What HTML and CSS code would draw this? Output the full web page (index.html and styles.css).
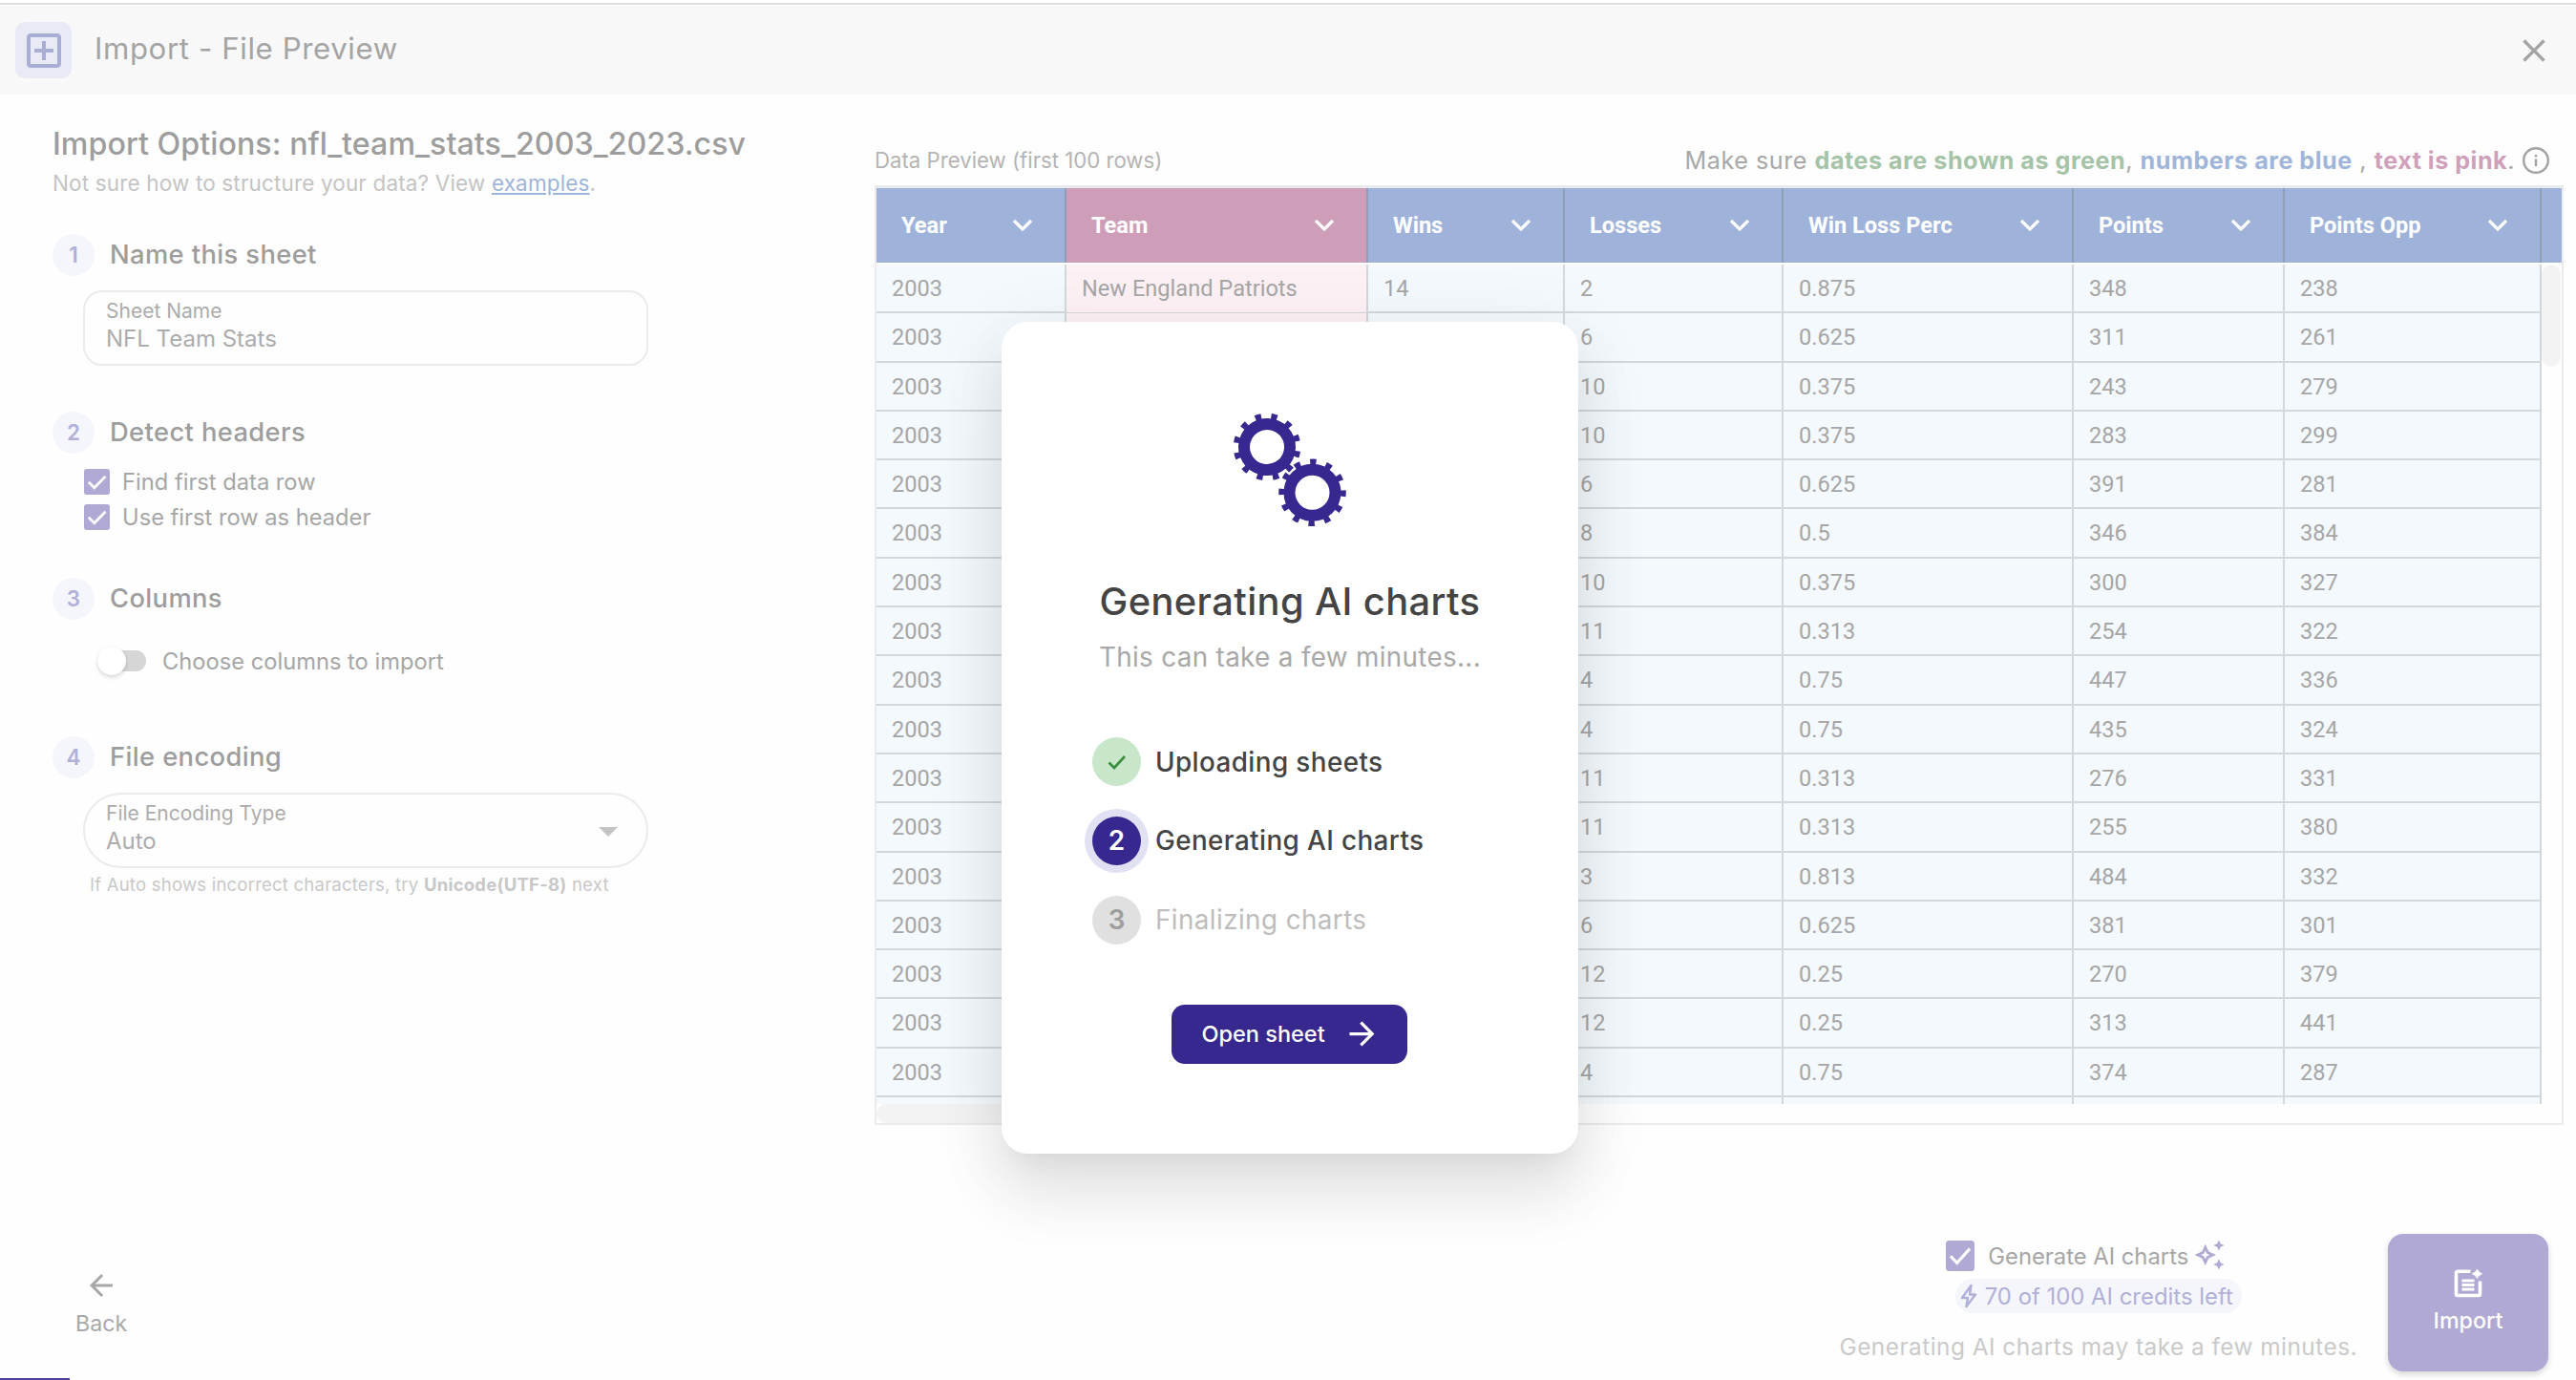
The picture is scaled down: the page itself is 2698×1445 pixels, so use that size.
FILE: index.html
```html
<!DOCTYPE html>
<html lang="en">
<head>
    <meta charset="UTF-8">
    <title>Import - File Preview</title>
    <link rel="stylesheet" href="styles.css">
</head>
<body>
    <header class="top-bar">
        <div class="top-icon">
            <svg width="48" height="48" viewBox="0 0 24 24"><path d="M19 3H5c-1.11 0-2 .9-2 2v14c0 1.1.89 2 2 2h14c1.1 0 2-.9 2-2V5c0-1.1-.9-2-2-2zm0 16H5V5h14v14zm-8-2h2v-4h4v-2h-4V7h-2v4H7v2h4z"/></svg>
        </div>
        <h1 class="top-title">Import - File Preview</h1>
        <svg class="close-icon" width="40" height="40" viewBox="0 0 24 24"><path d="M19 6.41L17.59 5 12 10.59 6.41 5 5 6.41 10.59 12 5 17.59 6.41 19 12 13.41 17.59 19 19 17.59 13.41 12z"/></svg>
    </header>

    <main class="content">
        <section class="options">
            <h2 class="options-title">Import Options: nfl_team_stats_2003_2023.csv</h2>
            <p class="options-hint">Not sure how to structure your data? View <a href="#" class="link">examples</a>.</p>

            <div class="step step-name">
                <div class="step-head"><span class="step-number">1</span><h3 class="step-title">Name this sheet</h3></div>
                <div class="field">
                    <span class="field-label">Sheet Name</span>
                    <span class="field-value">NFL Team Stats</span>
                </div>
            </div>

            <div class="step step-headers">
                <div class="step-head"><span class="step-number">2</span><h3 class="step-title">Detect headers</h3></div>
                <div class="check-row check-first">
                    <svg class="checkbox" width="27" height="27" viewBox="0 0 18 18"><rect width="18" height="18" rx="2"/><path d="M3.2 9.2l4 4 7.8-8"/></svg>
                    <span>Find first data row</span>
                </div>
                <div class="check-row">
                    <svg class="checkbox" width="27" height="27" viewBox="0 0 18 18"><rect width="18" height="18" rx="2"/><path d="M3.2 9.2l4 4 7.8-8"/></svg>
                    <span>Use first row as header</span>
                </div>
            </div>

            <div class="step step-columns">
                <div class="step-head"><span class="step-number">3</span><h3 class="step-title">Columns</h3></div>
                <div class="toggle-row">
                    <span class="toggle"><span class="knob"></span></span>
                    <span>Choose columns to import</span>
                </div>
            </div>

            <div class="step">
                <div class="step-head"><span class="step-number">4</span><h3 class="step-title">File encoding</h3></div>
                <div class="field field-select">
                    <div class="field-text">
                        <span class="field-label">File Encoding Type</span>
                        <span class="field-value">Auto</span>
                    </div>
                    <span class="arrow-down"></span>
                </div>
                <p class="helper">If Auto shows incorrect characters, try <b>Unicode(UTF-8)</b> next</p>
            </div>
        </section>

        <section class="preview">
            <div class="preview-head">
                <span class="preview-title">Data Preview (first 100 rows)</span>
                <span class="legend">Make sure <b class="green">dates are shown as green</b>, <b class="blue">numbers are blue</b> , <b class="pink">text is pink</b>.</span>
                <svg class="info-icon" width="30" height="30" viewBox="0 0 30 30"><circle cx="15" cy="15" r="12.8"/><path d="M15 13.5v7.5M15 9v2.6"/></svg>
            </div>

            <div class="table">
                <div class="table-header">
                    <div class="th">Year<svg class="chevron" width="22" height="14" viewBox="0 0 22 14"><path d="M2 2l9 9 9-9"/></svg></div>
                    <div class="th th-text">Team<svg class="chevron" width="22" height="14" viewBox="0 0 22 14"><path d="M2 2l9 9 9-9"/></svg></div>
                    <div class="th">Wins<svg class="chevron" width="22" height="14" viewBox="0 0 22 14"><path d="M2 2l9 9 9-9"/></svg></div>
                    <div class="th">Losses<svg class="chevron" width="22" height="14" viewBox="0 0 22 14"><path d="M2 2l9 9 9-9"/></svg></div>
                    <div class="th">Win Loss Perc<svg class="chevron" width="22" height="14" viewBox="0 0 22 14"><path d="M2 2l9 9 9-9"/></svg></div>
                    <div class="th">Points<svg class="chevron" width="22" height="14" viewBox="0 0 22 14"><path d="M2 2l9 9 9-9"/></svg></div>
                    <div class="th">Points Opp<svg class="chevron" width="22" height="14" viewBox="0 0 22 14"><path d="M2 2l9 9 9-9"/></svg></div>
                </div>
                <div class="table-scroll">
                    <div class="table-body">
                        <div class="tr"><span>2003</span><span>New England Patriots</span><span>14</span><span>2</span><span>0.875</span><span>348</span><span>238</span></div>
                        <div class="tr"><span>2003</span><span></span><span></span><span>6</span><span>0.625</span><span>311</span><span>261</span></div>
                        <div class="tr"><span>2003</span><span></span><span></span><span>10</span><span>0.375</span><span>243</span><span>279</span></div>
                        <div class="tr"><span>2003</span><span></span><span></span><span>10</span><span>0.375</span><span>283</span><span>299</span></div>
                        <div class="tr"><span>2003</span><span></span><span></span><span>6</span><span>0.625</span><span>391</span><span>281</span></div>
                        <div class="tr"><span>2003</span><span></span><span></span><span>8</span><span>0.5</span><span>346</span><span>384</span></div>
                        <div class="tr"><span>2003</span><span></span><span></span><span>10</span><span>0.375</span><span>300</span><span>327</span></div>
                        <div class="tr"><span>2003</span><span></span><span></span><span>11</span><span>0.313</span><span>254</span><span>322</span></div>
                        <div class="tr"><span>2003</span><span></span><span></span><span>4</span><span>0.75</span><span>447</span><span>336</span></div>
                        <div class="tr"><span>2003</span><span></span><span></span><span>4</span><span>0.75</span><span>435</span><span>324</span></div>
                        <div class="tr"><span>2003</span><span></span><span></span><span>11</span><span>0.313</span><span>276</span><span>331</span></div>
                        <div class="tr"><span>2003</span><span></span><span></span><span>11</span><span>0.313</span><span>255</span><span>380</span></div>
                        <div class="tr"><span>2003</span><span></span><span></span><span>3</span><span>0.813</span><span>484</span><span>332</span></div>
                        <div class="tr"><span>2003</span><span></span><span></span><span>6</span><span>0.625</span><span>381</span><span>301</span></div>
                        <div class="tr"><span>2003</span><span></span><span></span><span>12</span><span>0.25</span><span>270</span><span>379</span></div>
                        <div class="tr"><span>2003</span><span></span><span></span><span>12</span><span>0.25</span><span>313</span><span>441</span></div>
                        <div class="tr"><span>2003</span><span></span><span></span><span>4</span><span>0.75</span><span>374</span><span>287</span></div>
                        <div class="tr"><span></span><span></span><span></span><span></span><span></span><span></span><span></span></div>
                    </div>
                    <div class="scroll-y"></div>
                </div>
                <div class="scroll-x"></div>
            </div>
        </section>
    </main>

    <footer class="footer">
        <a href="#" class="back">
            <svg width="36" height="36" viewBox="0 0 24 24"><path d="M20 11H7.83l5.59-5.59L12 4l-8 8 8 8 1.41-1.41L7.83 13H20v-2z"/></svg>
            Back
        </a>
        <div class="ai-options">
            <div class="ai-check">
                <svg class="checkbox" width="30" height="32" viewBox="0 0 18 18" preserveAspectRatio="none"><rect width="18" height="18" rx="2"/><path d="M3 9.2l4 4 8-8.4"/></svg>
                <span class="ai-label">Generate AI charts</span>
                <svg class="sparkle" width="34" height="34" viewBox="0 0 24 24"><path d="M19 9l1.25-2.75L23 5l-2.75-1.25L19 1l-1.25 2.75L15 5l2.75 1.25L19 9zm0 6l-1.25 2.75L15 19l2.75 1.25L19 23l1.25-2.75L23 19l-2.75-1.25L19 15zm-7.5-5.5L9 4 6.5 9.5 1 12l5.5 2.5L9 20l2.5-5.5L17 12l-5.5-2.5zm-1.51 3.49L9 15.17l-.99-2.18L5.83 12l2.18-.99L9 8.83l.99 2.18 2.18.99-2.18.99z"/></svg>
            </div>
            <div class="credits">
                <svg class="bolt" width="18" height="26" viewBox="0 0 18 26"><path d="M11.5 2L2 15h6l-1.5 9L16 11.5h-6z"/></svg>
                70 of 100 AI credits left
            </div>
            <p class="ai-note">Generating AI charts may take a few minutes.</p>
        </div>
        <button class="import-button">
            <svg width="30" height="30" viewBox="0 0 30 30">
                <path class="doc" d="M17.5 2.2H4a1.5 1.5 0 0 0-1.5 1.5V26A1.5 1.5 0 0 0 4 27.5h22a1.5 1.5 0 0 0 1.5-1.5V12.5"/>
                <path class="doc-lines" d="M8.5 12h13M8.5 16.5h13M8.5 21h13"/>
                <path class="doc-plus" d="M24.5 0l1.8 3 3.2 1.8-3.2 1.8-1.8 3-1.8-3-3.2-1.8 3.2-1.8z"/>
            </svg>
            Import
        </button>
    </footer>
    <div class="progress"></div>

    <div class="modal">
        <svg class="gears" width="120" height="120" viewBox="0 0 120 120">
            <g transform="rotate(13.5 36 36)">
                <circle class="gear-ring" cx="36" cy="36" r="24"/>
                <circle class="gear-teeth" cx="36" cy="36" r="31.5" pathLength="120"/>
            </g>
            <g transform="rotate(1.5 83.5 83.8)">
                <circle class="gear-ring" cx="83.5" cy="83.8" r="24"/>
                <circle class="gear-teeth" cx="83.5" cy="83.8" r="31.5" pathLength="120"/>
            </g>
        </svg>
        <h2 class="modal-title">Generating AI charts</h2>
        <p class="modal-text">This can take a few minutes...</p>
        <div class="stages">
            <div class="stage">
                <span class="stage-dot dot-done"><svg width="26" height="26" viewBox="0 0 26 26"><path d="M4.5 13.5l5.5 5.5 11-12"/></svg></span>
                <span>Uploading sheets</span>
            </div>
            <div class="stage">
                <span class="stage-dot dot-active">2</span>
                <span>Generating AI charts</span>
            </div>
            <div class="stage stage-waiting">
                <span class="stage-dot dot-waiting">3</span>
                <span>Finalizing charts</span>
            </div>
        </div>
        <button class="open-button">
            Open sheet
            <svg width="39" height="39" viewBox="0 0 24 24"><path d="M12 4l-1.41 1.41L16.17 11H4v2h12.17l-5.58 5.59L12 20l8-8z"/></svg>
        </button>
    </div>
</body>
</html>
```
FILE: styles.css
```css
* {
    box-sizing: border-box;
}

body {
    font-family: Inter, "Liberation Sans", sans-serif;
    margin: 0;
    display: flex;
    flex-direction: column;
    height: 1445px;
    overflow: hidden;
    position: relative;
    background-color: #fefefe;
    color: #a3a3a3;
}

h1, h2, h3, p {
    margin: 0;
    font-weight: 400;
}

svg {
    flex: none;
    fill: currentColor;
}

button {
    border: none;
    font-family: inherit;
    cursor: pointer;
}

/* Top bar */
.top-bar {
    height: 99px;
    flex: none;
    display: flex;
    align-items: center;
    padding: 6px 24px 0 16px;
    background: linear-gradient(#fff 3px, #ddd 3px, #ddd 5px, #fff 5px, #fff 6px, #f8f8f8 6px);
}

.top-icon {
    width: 59px;
    height: 59px;
    border-radius: 10px;
    background-color: #e8eaf6;
    color: #aaaed5;
    display: flex;
    align-items: center;
    justify-content: center;
}

.top-title {
    flex: 1;
    margin: 0 0 3px 24px;
    font-size: 31.2px;
    letter-spacing: 0.6px;
    line-height: 40px;
    color: #a4a4a4;
}

.close-icon {
    color: #a3a3a3;
}

.content {
    display: flex;
    height: 1181px;
    flex: none;
}

/* Left column */
.options {
    width: 916px;
    flex: none;
    padding: 32px 0 0 55px;
}

.options-title {
    font-size: 32.2px;
    font-weight: 500;
    letter-spacing: 0.05px;
    line-height: 40px;
    color: #9d9d9d;
}

.options-hint {
    margin-top: 6px;
    font-size: 22.5px;
    letter-spacing: 0.15px;
    line-height: 30px;
    color: #c4c4c4;
}

.link {
    color: #9fb5da;
}

.step-name {
    height: 186px;
    margin-top: 38px;
}

.step-headers {
    height: 174px;
}

.step-columns {
    height: 166px;
}

.step-head {
    display: flex;
    align-items: center;
    height: 43px;
    margin-bottom: 1px;
}

.step-number {
    width: 44px;
    height: 44px;
    border-radius: 50%;
    background-color: #f5f6fb;
    color: #b0b0d8;
    font-size: 22.5px;
    font-weight: 600;
    line-height: 43px;
    text-align: center;
}

.step-title {
    margin-left: 16px;
    font-size: 27.3px;
    font-weight: 500;
    letter-spacing: 0.4px;
    color: #9d9d9d;
}

.field {
    width: 592px;
    height: 79px;
    margin: 16px 0 0 32px;
    padding: 7px 22px 0;
    border: 2px solid #ebebeb;
    border-radius: 20px;
}

.field-label {
    display: block;
    font-size: 21px;
    line-height: 26px;
    color: #acacac;
}

.field-value {
    display: block;
    font-size: 24px;
    line-height: 32px;
    color: #acacac;
}

.field-select {
    display: flex;
    justify-content: space-between;
    border-radius: 40px;
    padding-right: 30px;
}

.arrow-down {
    margin-top: 27px;
    width: 0;
    height: 0;
    border: 10px solid transparent;
    border-top-color: #c4c4c4;
    border-bottom: none;
}

.helper {
    margin: 5px 0 0 39px;
    font-size: 18.5px;
    letter-spacing: 0.23px;
    line-height: 24px;
    color: #c8c8c8;
}

.check-row {
    display: flex;
    align-items: center;
    height: 37px;
    padding-left: 33px;
    gap: 13px;
    font-size: 23.7px;
    color: #a6a6a6;
}

.check-first {
    margin-top: 12px;
}

.checkbox {
    fill: #afa9d3;
}

.checkbox path {
    fill: none;
    stroke: #fff;
    stroke-width: 1.8;
}

.toggle-row {
    display: flex;
    align-items: center;
    height: 40px;
    margin-top: 24px;
    padding-left: 47px;
    font-size: 23.7px;
    color: #a6a6a6;
}

.toggle {
    width: 51px;
    height: 22px;
    margin-right: 17px;
    border-radius: 11px;
    background-color: #d6d6d6;
    display: flex;
    align-items: center;
}

.knob {
    width: 30px;
    height: 30px;
    flex: none;
    border-radius: 50%;
    background-color: #fff;
    box-shadow: 0 3px 4px rgba(0, 0, 0, 0.12), 0 0 3px rgba(0, 0, 0, 0.06);
}

/* Data preview */
.preview-head {
    display: flex;
    align-items: center;
    width: 1769px;
    height: 95px;
    padding: 42px 14px 0 0;
}

.preview-title {
    flex: 1;
    font-size: 22.2px;
    color: #b4b4b4;
}

.legend {
    margin-right: 7px;
    font-size: 25.2px;
    letter-spacing: 0.5px;
    color: #a8a8a8;
}

.green {
    color: #a5c3a7;
}

.blue {
    color: #9fb5da;
}

.pink {
    color: #d09fba;
}

.info-icon {
    fill: none;
    stroke: #a3a3a3;
    stroke-width: 2.4;
}

.table {
    width: 1769px;
    height: 984px;
    border: 2px solid #ebebeb;
    border-top: 3px solid #e9eaee;
    font-family: Roboto, "Liberation Sans", sans-serif;
    font-size: 23.6px;
}

.table-header,
.tr {
    display: grid;
    grid-template-columns: 199px 316px 206px 229px 304px 221px 269px;
}

.table-header {
    height: 80px;
    padding-bottom: 2px;
    background-color: #9fb3da;
    background-clip: content-box;
    color: #fff;
    font-weight: 700;
}

.th {
    display: flex;
    align-items: center;
    justify-content: space-between;
    padding: 0 33px 0 26px;
    border-right: 2px solid #8f9db8;
}

.th-text {
    background-color: #ce9eb8;
}

.chevron {
    fill: none;
    stroke: #fff;
    stroke-width: 3.2;
}

.table-scroll {
    display: flex;
    height: 879px;
    overflow: hidden;
}

.tr {
    height: 51.3px;
    width: 1744px;
    border-bottom: 2px solid #d3d8dc;
    background-color: #f4f9fd;
    line-height: 50px;
    color: #a6a6a6;
}

.tr span {
    height: 50px;
    padding-left: 16px;
    border-right: 2px solid #d3d8dc;
}

.tr span:nth-child(2) {
    background-color: #fdf1f5;
}

.scroll-y {
    width: 20px;
    height: 107px;
    border-radius: 10px;
    background-color: #f3f3f3;
}

.scroll-x {
    width: 520px;
    height: 20px;
    border-radius: 10px;
    background-color: #f3f3f3;
}

/* Footer */
.footer {
    display: flex;
    height: 163px;
    flex: none;
    padding: 12px 29px 0 79px;
}

.back {
    display: flex;
    flex-direction: column;
    align-items: center;
    height: 90px;
    margin: 36px auto 0 0;
    font-size: 23.2px;
    line-height: 30px;
    gap: 6.5px;
    color: #a8a8a8;
    text-decoration: none;
}

.ai-options {
    display: flex;
    flex-direction: column;
    align-items: center;
    margin: 7px 32px 0 0;
}

.ai-check {
    display: flex;
    align-items: center;
    height: 32px;
    margin-right: 26px;
}

.ai-label {
    margin: 0 5px 0 14px;
    font-size: 23.8px;
    color: #a6a6a6;
}

.sparkle {
    color: #afa9d3;
    margin-top: -2px;
}

.credits {
    display: flex;
    align-items: center;
    height: 36px;
    margin-top: 8px;
    padding: 0 9px 0 5px;
    gap: 8px;
    border-radius: 18px;
    background-color: #f5f6fb;
    font-size: 23.9px;
    color: #b0b0d8;
}

.bolt {
    fill: none;
    stroke: #b0b0d8;
    stroke-width: 2.5;
    stroke-linejoin: round;
}

.ai-note {
    margin-top: 20px;
    font-size: 24.4px;
    letter-spacing: 0.47px;
    line-height: 31px;
    color: #cacaca;
}

.import-button {
    display: flex;
    flex-direction: column;
    align-items: center;
    width: 168px;
    height: 144px;
    padding: 37px 0 0;
    gap: 9px;
    border-radius: 16px;
    background-color: #afa9d3;
    box-shadow: 0 3px 6px rgba(0, 0, 0, 0.16);
    color: #fff;
    font-size: 23.3px;
    font-weight: 500;
    line-height: 30px;
}

.doc,
.doc-lines {
    fill: none;
    stroke: #fff;
    stroke-width: 3.6;
}

.doc-lines {
    stroke-width: 3;
}

.doc-plus {
    stroke: #fff;
    stroke-width: 1;
}

.progress {
    width: 73px;
    height: 2px;
    background-color: #4a3fa0;
}

/* Generating dialog */
.modal {
    position: absolute;
    left: 1049px;
    top: 337px;
    width: 604px;
    height: 871px;
    padding-top: 95px;
    border-radius: 27px;
    background-color: #fff;
    box-shadow: 0 19px 26px -12px rgba(0, 0, 0, 0.05), 0 41px 65px 5px rgba(0, 0, 0, 0.08), 0 15px 78px 14px rgba(0, 0, 0, 0.05);
    display: flex;
    flex-direction: column;
    align-items: center;
    color: #444;
}

.gear-ring,
.gear-teeth {
    fill: none;
    stroke: #36288f;
    stroke-width: 12;
}

.gear-teeth {
    stroke-width: 7.5;
    stroke-dasharray: 3.8 6.2;
    stroke-dashoffset: 1.9;
}

.modal-title {
    margin-top: 53px;
    font-size: 39.8px;
    font-weight: 500;
    letter-spacing: 0.4px;
    line-height: 50px;
}

.modal-text {
    margin-top: 15px;
    font-size: 27.8px;
    letter-spacing: 0.34px;
    line-height: 36px;
    color: #a8a8a8;
}

.stages {
    display: flex;
    flex-direction: column;
    align-self: flex-start;
    gap: 31.2px;
    margin: 66px 0 0 95px;
}

.stage {
    display: flex;
    align-items: center;
    height: 51.5px;
    gap: 15px;
    font-size: 27.8px;
    font-weight: 500;
    letter-spacing: 0.42px;
}

.stage-waiting {
    color: #bdbdbd;
    font-weight: 400;
}

.stage-dot {
    width: 51px;
    height: 51px;
    border-radius: 50%;
    display: flex;
    align-items: center;
    justify-content: center;
    font-weight: 600;
    letter-spacing: 0;
}

.dot-done {
    background-color: #c8e6c9;
}

.dot-done path {
    fill: none;
    stroke: #388e3c;
    stroke-width: 2.6;
}

.dot-active {
    background-color: #36288f;
    box-shadow: 0 0 0 8px #e0e2f4;
    color: #fff;
}

.dot-waiting {
    background-color: #e0e0e0;
    color: #9e9e9e;
}

.open-button {
    display: flex;
    align-items: center;
    width: 247px;
    height: 62px;
    margin: 63px 2px 0 0;
    padding: 0 0 0 32px;
    gap: 19px;
    border-radius: 14px;
    background-color: #36288f;
    color: #fff;
    font-size: 23.5px;
    font-weight: 500;
}
```
